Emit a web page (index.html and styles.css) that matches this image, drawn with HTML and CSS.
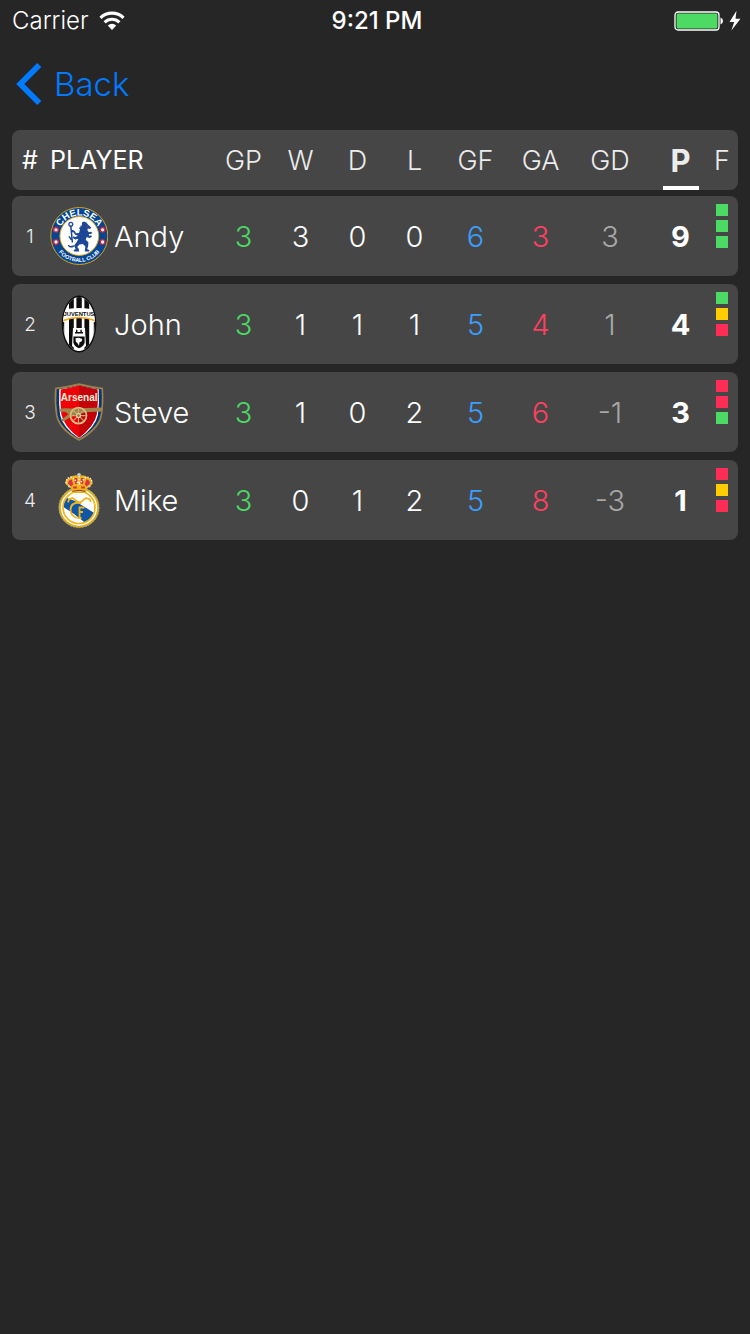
FILE: index.html
```html
<!DOCTYPE html>
<html lang="en">
<head>
<meta charset="utf-8">
<meta name="viewport" content="width=device-width, initial-scale=1">
<title>Standings</title>
<link rel="stylesheet" href="styles.css">
</head>
<body>
<header class="status-bar">
  <div class="status-carrier">
    <span>Carrier</span>
    <svg class="wifi" viewBox="0 0 26 20" aria-hidden="true">
      <path d="M1.5 6.8a16.6 16.6 0 0 1 23 0" fill="none" stroke="#fff" stroke-width="3.2"/>
      <path d="M5.6 11.3a10.8 10.8 0 0 1 14.8 0" fill="none" stroke="#fff" stroke-width="3"/>
      <path d="M8.8 14.5a6.2 6.2 0 0 1 8.4 0L13 19z" fill="#fff"/>
    </svg>
  </div>
  <time class="status-time">9:21 PM</time>
  <div class="status-power">
    <svg class="battery" viewBox="0 0 68 22" aria-label="Battery charging">
      <rect x="1" y="2" width="44" height="18" rx="3" fill="#262626" stroke="#fff" stroke-width="1.3"/>
      <rect x="2.6" y="3.6" width="40.8" height="14.8" rx="1.4" fill="#4cd964"/>
      <path d="M46.5 7.5q2.5.6 2.5 3.5t-2.5 3.5z" fill="#fff"/>
      <path d="M62.5.8 55.5 12h4.7L57.4 20.6 66.5 8.8h-5z" fill="#fff"/>
    </svg>
  </div>
</header>

<nav class="nav-bar">
  <a class="back" href="#">
    <svg class="chevron" viewBox="0 0 26 42" aria-hidden="true"><path d="M23.3 2 4.3 21l19 19" fill="none" stroke="#007aff" stroke-width="5.8"/></svg>
    <span>Back</span>
  </a>
</nav>

<main class="content">
<table class="standings">
  <thead>
    <tr class="row head">
      <th class="rank" scope="col">#</th>
      <th class="player" scope="col">PLAYER</th>
      <th scope="col">GP</th>
      <th scope="col">W</th>
      <th scope="col">D</th>
      <th scope="col">L</th>
      <th scope="col">GF</th>
      <th scope="col">GA</th>
      <th scope="col">GD</th>
      <th class="sorted" scope="col" aria-sort="descending">P</th>
      <th scope="col">F</th>
    </tr>
  </thead>
  <tbody>
    <tr class="row">
      <td class="rank">1</td>
      <td class="player">
        <svg class="crest" viewBox="6 7 58 58" role="img" aria-label="Chelsea">
          <defs>
            <path id="arc-top" d="M14.3 36.5a21 21 0 0 1 42 0"/>
            <path id="arc-bottom" d="M9.3 36a26 26 0 0 0 52 0"/>
          </defs>
          <circle cx="35.3" cy="36" r="28.5" fill="#034694" stroke="#d9a21b" stroke-width="1"/>
          <circle cx="35.3" cy="36" r="19.4" fill="#fff" stroke="#d9a21b" stroke-width="1"/>
          <text class="crest-arc" font-size="9.5"><textPath href="#arc-top" startOffset="50%" text-anchor="middle">CHELSEA</textPath></text>
          <text class="crest-arc" font-size="5.5"><textPath href="#arc-bottom" startOffset="50%" text-anchor="middle">FOOTBALL CLUB</textPath></text>
          <g fill="#fff" stroke="#e21c34" stroke-width="1.3">
            <circle cx="12" cy="29.8" r="2.3"/><circle cx="12" cy="42" r="2.3"/>
            <circle cx="58.6" cy="29.8" r="2.3"/><circle cx="58.6" cy="42" r="2.3"/>
          </g>
          <path fill="#1c4796" d="M38 22.5l2-.9 2.3.8 1.9 2.3 3 2.8-1.2 1.5-2-.4-.7 1.4 1.6 2.2 2.4-.5 1 1.2-1.6 1.2h-2l.4 1.6 2.3-.3.5 1.5-2.5 1-2.7-.9-1 2.7 2.7 2.5-.2 3.7-1 3 2.2 1.4-.2 1.3h-4.5l.7-5-2.5-2.6-3.5.4-2.2 2.5 1.3 1.3.6 3.4h-4.8l-.7-1.3 2-1.2-1.5-3.5 2.7-3.6 1.6-3.2-3 .6-2.6-1.4.3-1.6 2.4.7 2.4-1.3-2.7-1-2-2.7-1.4.6-.8-1.4 1.7-1.5 2.2 1.5 1.2 2 2.9-.4 1-3.7-1.2-1.3 1.8-.8-.3-1.7 1.5.3z"/>
          <path fill="none" stroke="#1c4796" stroke-width="1.5" d="M26.8 26l1.6 16.5M27.5 39.8l-2.6-3.4M30 46q-5 2-5.5-1"/>
          <circle cx="26.8" cy="24.2" r="1.9" fill="none" stroke="#1c4796" stroke-width="1.3"/>
          <path d="M42.4 26.4h1.7" stroke="#e21c34" stroke-width="1.1"/>
        </svg>
        <span>Andy</span>
      </td>
      <td class="played">3</td><td>3</td><td>0</td><td>0</td>
      <td class="goals-for">6</td><td class="goals-against">3</td><td class="diff">3</td>
      <td class="points">9</td>
      <td class="form"><i class="win"></i><i class="win"></i><i class="win"></i></td>
    </tr>
    <tr class="row">
      <td class="rank">2</td>
      <td class="player">
        <svg class="crest" viewBox="6 7 58 58" role="img" aria-label="Juventus">
          <defs><clipPath id="juve-oval"><ellipse cx="35" cy="36" rx="16" ry="27"/></clipPath></defs>
          <ellipse cx="35" cy="36" rx="17.3" ry="28.5" fill="#0d0d0d"/>
          <g clip-path="url(#juve-oval)">
            <path fill="#fff" d="M18 8h34v56H18z"/>
            <path fill="#0d0d0d" d="M25 8h4.8v53H25zM32.4 30h5.4v11h-5.4zM32.4 8h5.4v14h-5.4zM40.4 8h4.8v53h-4.8zM17 34h3.2v16H17zM49.8 34H53v16h-3.2z"/>
            <path fill="#fff" d="M17 22.5q18-5 36 0V33q-18-7-36 0z"/>
            <path fill="none" stroke="#f8a913" stroke-width="1.6" d="M17 33.5q18-8 36 0"/>
            <path fill="#fff" d="M29 40h12l1 18-7 6-7-6z"/>
          </g>
          <path fill="#0d0d0d" d="M29.4 48.6h11.2v6.2q-1 3.6-5.6 5.4-4.6-1.8-5.6-5.4zM31 44h8v1.5h-8zM32 41.8h1.4V44H32zM36.4 41.8h1.4V44h-1.4z"/>
          <path fill="#fff" d="M31.5 50.2l3-.5 3.8 1.4-.8 2.4-2 .7-.5 3.6-1.5-2.5-1.6-1.6z"/>
          <text class="crest-juve" x="35" y="27.5" text-anchor="middle" font-size="5.8">JUVENTUS</text>
        </svg>
        <span>John</span>
      </td>
      <td class="played">3</td><td>1</td><td>1</td><td>1</td>
      <td class="goals-for">5</td><td class="goals-against">4</td><td class="diff">1</td>
      <td class="points">4</td>
      <td class="form"><i class="win"></i><i class="draw"></i><i class="loss"></i></td>
    </tr>
    <tr class="row">
      <td class="rank">3</td>
      <td class="player">
        <svg class="crest" viewBox="6 7 58 58" role="img" aria-label="Arsenal">
          <path fill="#9c824a" d="M11 11.7q11-1.3 24-4.4 13 3.1 24 4.4 1.3 15-1 28.3Q55 54 35 65 15 54 12 40 9.7 26 11 11.7z"/>
          <path fill="#063672" d="M12.6 13.2q11.4-1.3 22.4-4 11 2.7 22.4 4 1 14-1 26.3Q53.5 52 35 63 16.5 52 13.6 39.5 11.6 27 12.6 13.2z"/>
          <path fill="#fff" d="M15.3 13.3q10.7-1.3 19.7-3.9 9 2.6 19.7 3.9.8 14-.8 25.7Q51.5 51.5 35 62.6 18.5 51.5 16.1 39 14.5 27 15.3 13.3z"/>
          <path fill="#ef0107" d="M16.6 13.4Q27 12 35 9.6q8 2.4 18.4 3.8.6 14-.8 25.2Q50 50.5 35 61.8 20 50.5 17.4 38.6 16 27 16.6 13.4z"/>
          <path fill="#c4000b" d="M35 9.6q8 2.4 18.4 3.8.6 14-.8 25.2Q50 50.5 35 61.8z"/>
          <path fill="#a1854c" d="M15.5 33l4.5-.8 10 .2 28-.9v3.9L44 36l-14 3-10.5 6.5-3-1.2 8-6.1-3-2.3-5.7-.4z"/>
          <circle cx="34.5" cy="39.6" r="8" fill="none" stroke="#d8bd80" stroke-width="1.8"/>
          <path stroke="#c6aa6c" stroke-width="1.2" d="M34.5 31.6v16M26.5 39.6h16M28.9 34l11.2 11.2M40.1 34L28.9 45.2"/>
          <circle cx="34.5" cy="39.6" r="2" fill="#9c824a" stroke="#f5e6bf"/>
          <text class="crest-arsenal" x="35.2" y="24.8" text-anchor="middle" font-size="10">Arsenal</text>
        </svg>
        <span>Steve</span>
      </td>
      <td class="played">3</td><td>1</td><td>0</td><td>2</td>
      <td class="goals-for">5</td><td class="goals-against">6</td><td class="diff">-1</td>
      <td class="points">3</td>
      <td class="form"><i class="loss"></i><i class="loss"></i><i class="win"></i></td>
    </tr>
    <tr class="row">
      <td class="rank">4</td>
      <td class="player">
        <svg class="crest" viewBox="6 7 58 58" role="img" aria-label="Real Madrid">
          <defs><clipPath id="rm-disc"><circle cx="35" cy="43.5" r="16"/></clipPath></defs>
          <circle cx="35" cy="43.5" r="19.2" fill="#fff" stroke="#e3a916" stroke-width="2"/>
          <circle cx="35" cy="43.5" r="20.2" fill="none" stroke="#79b4d8" stroke-width=".8" stroke-dasharray="1.5 1.5"/>
          <g clip-path="url(#rm-disc)"><path fill="#0f56a4" d="M18 42l5-8 8 3 21 13-8 11-14-11z"/></g>
          <circle cx="35" cy="43.5" r="16" fill="none" stroke="#f0b41c" stroke-width="1.7"/>
          <g fill="none" stroke="#f0b41c" stroke-width="1.8">
            <path d="M24 38.500l1-3 3.500-1.500 7 5 6.500-5 4 1.500.5 2.500"/>
            <path d="M37.500 39q-10.500-1.500-11 6.500 0 6.500 6.500 8.500"/>
            <path d="M35.500 54V43.500h5M35.500 48h3.500M33.500 54h4"/>
          </g>
          <path fill="#f0b41c" d="M27.5 29L28 25.5 22 20.5q-2-5.500 4-7 3.500-3 9-2 5.500-1 9 2 6 1.500 4 7L42 25.500l.5 3.500z"/>
          <path fill="#d93448" d="M24 19.5q.5-4 3.7-4l1.600 5-2 2zM30.500 14h2.600l.5 5.500-2.600.7zM37 14h2.600l-.5 6.200-2.600-.7zM42.300 15.500q3.700 0 3.700 4l-3.300 3-2-2zM29 22.500h4v2h-4zM37 22.500h4v2h-4z"/>
          <path fill="none" stroke="#fff" stroke-width="1.3" stroke-dasharray="1.3 1.5" d="M22 19.500q0-6.500 6-6.500l7 7 7-7q6 0 6 6.500M35 12v8"/>
          <path fill="none" stroke="#7a4a3c" d="M28.5 27.300q6.500-2 13 0"/>
          <path stroke="#b7d7ea" stroke-width="1.5" d="M35 9v3.500M33.200 10.500h3.600M24 22.500h2M44.500 22.500h2"/>
        </svg>
        <span>Mike</span>
      </td>
      <td class="played">3</td><td>0</td><td>1</td><td>2</td>
      <td class="goals-for">5</td><td class="goals-against">8</td><td class="diff">-3</td>
      <td class="points">1</td>
      <td class="form"><i class="loss"></i><i class="draw"></i><i class="loss"></i></td>
    </tr>
  </tbody>
</table>
</main>
</body>
</html>
```

FILE: styles.css
```css
* { box-sizing: border-box; }

body {
  margin: 0;
  min-height: 100vh;
  background: #262626;
  color: #fff;
  font-family: Inter, Roboto, "Liberation Sans", sans-serif;
  font-size: 29px;
  font-weight: 350;
}

.status-bar {
  display: grid;
  grid-template-columns: 1fr auto 1fr;
  align-items: center;
  height: 41px;
  padding: 0 8px 0 12px;
  font-size: 24px;
}

.status-carrier {
  display: flex;
  align-items: center;
  gap: 10px;
}

.wifi { width: 26px; height: 20px; }

.status-time { font-weight: 500; }

.status-power {
  display: flex;
  justify-content: flex-end;
}

.battery { width: 68px; height: 22px; }

.nav-bar {
  display: flex;
  align-items: center;
  height: 86px;
  padding: 0 16px;
}

.back {
  display: flex;
  align-items: center;
  gap: 12px;
  color: #007aff;
  font-size: 33px;
  text-decoration: none;
}

.chevron { width: 26px; height: 42px; }

.content { padding: 3px 12px; }

.standings,
.standings thead,
.standings tbody { display: grid; }

.standings { gap: 6px; }

.standings tbody { gap: 8px; }

.row {
  display: grid;
  grid-template-columns: 36px 1fr repeat(4, 57px) 65px 65px 74px 67px 16px;
  align-items: center;
  height: 80px;
  padding-right: 8px;
  border-radius: 8px;
  background: #464646;
}

.row td,
.row th {
  padding: 0;
  font-weight: 350;
  text-align: center;
}

.head { height: 60px; }

.head th {
  color: #ececec;
  font-size: 27px;
}

.head .rank,
.head .player {
  color: #fff;
  font-size: 25px;
  font-weight: 400;
}

.row .player {
  display: flex;
  align-items: center;
  gap: 6px;
  padding-left: 2px;
}

.row td.rank {
  color: #ececec;
  font-size: 19px;
}

.crest { width: 58px; height: 58px; }

.head .sorted {
  display: grid;
  align-items: center;
  align-self: stretch;
  font-size: 31px;
  font-weight: 700;
  background: linear-gradient(#fff, #fff) center bottom / 36px 4px no-repeat;
}

.played { color: #4cd964; }
.goals-for { color: #3b9eff; }
.goals-against { color: #ff4060; }
.diff { color: #a8a8a8; }

.row .points { font-weight: 700; }

.form {
  display: grid;
  align-self: start;
  justify-content: center;
  gap: 4px;
}

.row .form { padding-top: 8px; }

.form i { width: 12px; height: 12px; }

.win { background: #4cd964; }
.draw { background: #ffcc00; }
.loss { background: #ff2d55; }

.crest-arc {
  fill: #fff;
  font-family: "Liberation Sans", sans-serif;
  font-weight: 700;
}

.crest-juve {
  fill: #0d0d0d;
  font-family: "Liberation Sans", sans-serif;
  font-weight: 700;
}

.crest-arsenal {
  fill: #fff3dc;
  font-family: "Liberation Sans", sans-serif;
  font-weight: 700;
}
```
